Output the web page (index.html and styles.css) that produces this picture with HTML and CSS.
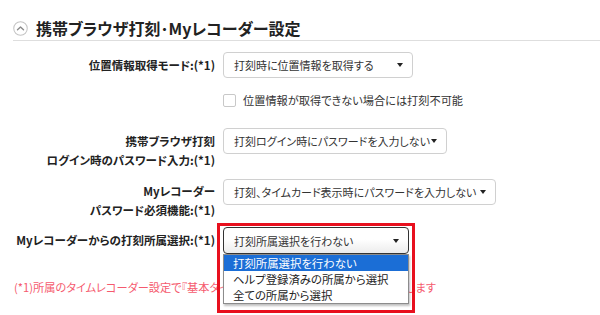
FILE: index.html
```html
<!DOCTYPE html>
<html lang="ja">
<head>
<meta charset="utf-8">
<link rel="stylesheet" href="styles.css">
</head>
<body>
<div class="section">
  <div class="section-head">
    <span class="toggle">
      <svg width="15" height="15" viewBox="0 0 16 16"><circle cx="8" cy="8" r="7.2" fill="#fff" stroke="#c4c4c4" stroke-width="1.1"/><path d="M4.8 9.4 L8 6.4 L11.2 9.4" fill="none" stroke="#8a8a8a" stroke-width="1.5" stroke-linecap="round" stroke-linejoin="round"/></svg>
    </span>
    <h2 class="title">携帯ブラウザ打刻･Myレコーダー設定</h2>
  </div>

  <div class="form">
    <div class="row row-1">
      <div class="label single">位置情報取得モード:(*1)</div>
      <div class="control">
        <div class="select w1"><span>打刻時に位置情報を取得する</span><i class="arrow"></i></div>
      </div>
    </div>

    <div class="row row-check">
      <div class="label"></div>
      <div class="control check">
        <span class="checkbox"></span>
        <span class="check-text">位置情報が取得できない場合には打刻不可能</span>
      </div>
    </div>

    <div class="row row-2">
      <div class="label multi p4">携帯ブラウザ打刻<br>ログイン時のパスワード入力:(*1)</div>
      <div class="control">
        <div class="select w2"><span>打刻ログイン時にパスワードを入力しない</span><i class="arrow"></i></div>
      </div>
    </div>

    <div class="row row-3">
      <div class="label multi p3">Myレコーダー<br>パスワード必須機能:(*1)</div>
      <div class="control">
        <div class="select w3"><span>打刻、タイムカード表示時にパスワードを入力しない</span><i class="arrow"></i></div>
      </div>
    </div>

    <div class="row row-4">
      <div class="label single s4">Myレコーダーからの打刻所属選択:(*1)</div>
      <div class="control anchor">
        <div class="select w4 open"><span>打刻所属選択を行わない</span><i class="arrow"></i></div>
        <ul class="dropdown">
          <li class="active">打刻所属選択を行わない</li>
          <li>ヘルプ登録済みの所属から選択</li>
          <li>全ての所属から選択</li>
        </ul>
        <div class="highlight-box"></div>
      </div>
    </div>

    <p class="note">(*1)所属のタイムレコーダー設定で『基本タイムレコーダー』を選択した場合に適用します</p>
  </div>
</div>
</body>
</html>
```

FILE: styles.css
```css
html, body {
  margin: 0;
  padding: 0;
  background: #fff;
}
body {
  font-family: "Noto Sans CJK JP", "Noto Sans", sans-serif;
  font-feature-settings: "palt";
  font-size: 11.2px;
  color: #333;
  width: 600px;
  height: 315px;
  overflow: hidden;
}
.section-head {
  display: flex;
  align-items: center;
  gap: 8px;
  margin-left: 13px;
  padding-top: 18px;
  padding-bottom: 2px;
  border-bottom: 1px solid #dedede;
}
.toggle {
  display: flex;
  width: 15px;
  height: 15px;
}
.title {
  margin: 0;
  font-size: 16px;
  line-height: 20px;
  font-weight: bold;
  color: #222;
}
.form {
  display: flex;
  flex-direction: column;
}
.row {
  display: grid;
  grid-template-columns: 215px auto;
  column-gap: 8px;
  align-items: start;
}
.row-1 { margin-top: 11px; }
.row-check { margin-top: 16px; }
.row-2 { margin-top: 21px; }
.row-3 { margin-top: 9px; }
.row-4 { margin-top: 7px; }

.label {
  text-align: right;
  font-weight: bold;
  font-size: 11.5px;
  color: #222;
  white-space: nowrap;
}
.label.single { line-height: 26px; }
.label.s4 { line-height: 27px; }
.label.multi { line-height: 19px; }
.label.p4 { padding-top: 4px; }
.label.p3 { padding-top: 3px; }

.control {
  display: flex;
  align-items: center;
}
.select {
  box-sizing: border-box;
  height: 26px;
  display: flex;
  align-items: center;
  justify-content: space-between;
  padding: 0 9px 0 10px;
  border: 1px solid #d0d0d0;
  border-radius: 4px;
  background: #fff;
  color: #333;
  font-size: 11px;
  white-space: nowrap;
}
.w1 { width: 190px; }
.w2 { width: 224px; }
.w3 { width: 273px; }
.w4 { width: 186px; height: 27px; }
.select.open {
  border-color: #333;
  background: linear-gradient(#ffffff, #ffffff 45%, #ececec);
}
.arrow {
  width: 0;
  height: 0;
  border-left: 3.5px solid transparent;
  border-right: 3.5px solid transparent;
  border-top: 4px solid #222;
}

.check {
  gap: 7px;
  height: 13px;
}
.checkbox {
  box-sizing: border-box;
  width: 13px;
  height: 13px;
  border: 1px solid #c8c8c8;
  border-radius: 2px;
  background: #fff;
}
.check-text {
  line-height: 13px;
}

.anchor {
  position: relative;
}
.dropdown {
  position: absolute;
  left: 0;
  top: 27px;
  width: 186px;
  box-sizing: border-box;
  margin: 0;
  padding: 0;
  list-style: none;
  background: #fff;
  border: 1px solid #8c8c8c;
  box-shadow: 1px 2px 2px rgba(0,0,0,0.25);
  z-index: 2;
}
.dropdown li {
  line-height: 16px;
  height: 16px;
  padding-left: 9px;
  color: #222;
  font-size: 11.4px;
  white-space: nowrap;
}
.dropdown li.active {
  background: #1b6ed6;
  color: #fff;
}
.highlight-box {
  position: absolute;
  left: -6px;
  top: -4px;
  width: 198px;
  height: 90px;
  box-sizing: border-box;
  border: 3px solid #e8101e;
  z-index: 3;
}

.note {
  margin: 24px 0 0 14px;
  line-height: 18px;
  color: #f55a6e;
  white-space: nowrap;
}
```
